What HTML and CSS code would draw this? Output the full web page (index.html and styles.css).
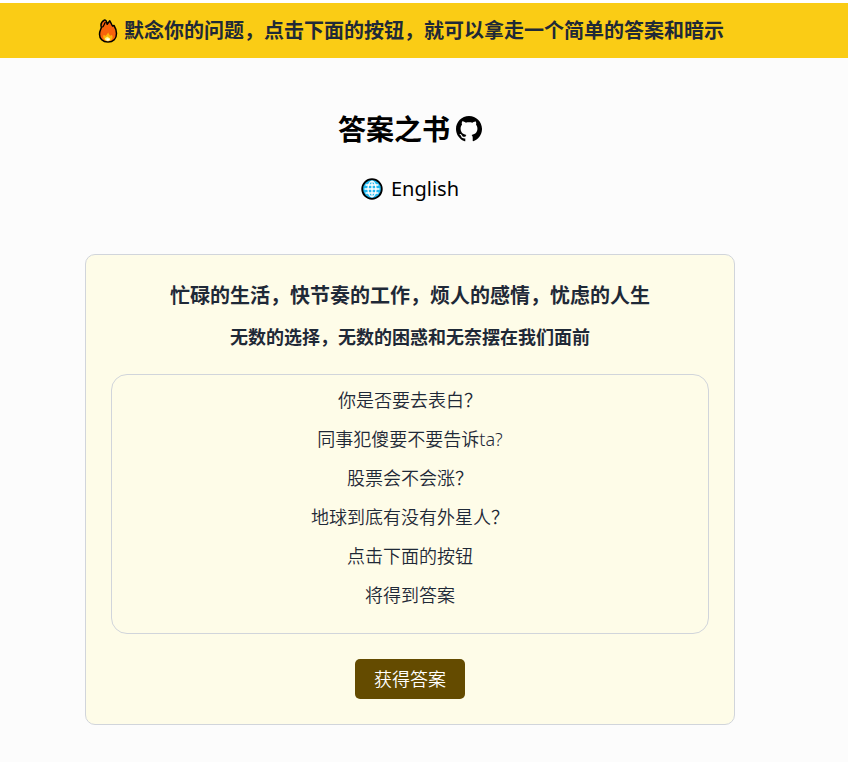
FILE: index.html
```html
<!DOCTYPE html>
<html lang="zh-CN">
<head>
<meta charset="utf-8">
<meta name="viewport" content="width=device-width, initial-scale=1">
<title>答案之书</title>
<link rel="stylesheet" href="styles.css">
</head>
<body>
<header class="banner">
  <svg class="flame" viewBox="0 0 20 24" aria-hidden="true">
    <path d="M10 23C4.500 23 1.500 19.500 1.500 15.200C1.500 12 3 10.200 3.400 8.500C2.600 6.200 3.200 3 6 1.300C7.500.600 8.500 1.800 8.600 3.200L9.200 5.200L11.800 1.800C13.200 4 13.400 5.600 14.600 7L16 6.500C17.600 9 18.500 11.500 18.500 14.500C18.500 19.500 15.300 23 10 23Z" fill="#f7630c" stroke="#000" stroke-width="1.500" stroke-linejoin="round"/>
    <path d="M4.200 8.200C5.800 7.600 6 5 7.500 3.200" fill="none" stroke="#000" stroke-width="1.200"/>
    <path d="M10 22.200C7.200 22.200 5.200 20.500 5.200 18L5.500 16L7.800 16.800L10.300 13.500C10.600 15 11.600 15.400 12 16.800L14 16C15.600 19 13.800 22.200 10 22.200Z" fill="#fcb50a"/>
    <path d="M7 20.500C6.500 18.500 8 18.700 9.500 17.500C10 18.700 12.700 19 12.200 20.500C11 22 8.200 22 7 20.500Z" fill="#fff478"/>
    <path d="M8.500 19.500H11.500V21.500H8.500Z" fill="#fff"/>
  </svg>
  <p>默念你的问题，点击下面的按钮，就可以拿走一个简单的答案和暗示</p>
</header>
<main class="page">
  <div class="title">
    <h1>答案之书</h1>
    <a href="#" aria-label="GitHub">
      <svg class="github" viewBox="64 76 895 895" aria-hidden="true"><path d="M511.600 76.300C264.300 76.200 64 276.400 64 523.500 64 718.900 189.300 885 363.800 946c23.500 5.900 19.900-10.800 19.900-22.200v-77.500c-135.700 15.900-141.200-73.900-150.300-88.900C215 726 171.500 718 184.500 703c30.900-15.900 62.400 4 98.900 57.900 26.400 39.100 77.900 32.500 104 26 5.700-23.500 17.900-44.500 34.700-60.800-140.600-25.200-199.200-111-199.200-213 0-49.500 16.300-95 48.300-131.700-20.400-60.500 1.900-112.300 4.900-120 58.100-5.200 118.500 41.600 123.200 45.300 33-8.900 70.700-13.600 112.900-13.600 42.400 0 80.200 4.900 113.500 13.900 11.300-8.600 67.300-48.800 121.300-43.900 2.900 7.700 24.700 58.300 5.500 118 32.400 36.800 48.900 82.700 48.900 132.300 0 102.200-59 188.100-200 212.900a127.500 127.500 0 0 1 38.100 91v112.500c.800 9 0 17.900 15 17.900 177.100-59.700 304.600-227 304.600-424.100 0-247.200-200.400-447.300-447.500-447.300z"/></svg>
    </a>
  </div>
  <a class="language" href="#">
    <svg class="globe" viewBox="0 0 22 22" aria-hidden="true">
      <circle cx="11" cy="11" r="9.800" fill="#20b8f0" stroke="#000" stroke-width="1.800"/>
      <g fill="none" stroke="#fff" stroke-width="1.300">
        <ellipse cx="11" cy="11" rx="4" ry="7.800"/>
        <path d="M11 3V19M3.500 11H18.500M4.500 7H17.500M4.500 15H17.500"/>
      </g>
    </svg>
    <span>English</span>
  </a>
  <section class="card">
    <h2>忙碌的生活，快节奏的工作，烦人的感情，忧虑的人生</h2>
    <h3>无数的选择，无数的困惑和无奈摆在我们面前</h3>
    <ul class="questions">
      <li>你是否要去表白？</li>
      <li>同事犯傻要不要告诉ta?</li>
      <li>股票会不会涨？</li>
      <li>地球到底有没有外星人？</li>
      <li>点击下面的按钮</li>
      <li>将得到答案</li>
    </ul>
    <button class="answer" type="button">获得答案</button>
  </section>
</main>
</body>
</html>
```
FILE: styles.css
```css
* {
  box-sizing: border-box;
  margin: 0;
  padding: 0;
}

body {
  background: #fcfcfc;
  border-top: 3px solid #fff;
  color: #1f2937;
  font-family: "Noto Sans", "Noto Sans CJK SC", sans-serif;
}

a {
  color: #000;
  text-decoration: none;
}

svg {
  display: block;
}

.banner {
  display: flex;
  align-items: center;
  justify-content: center;
  gap: 6px;
  padding: 13px 26px 12px 0;
  background: #facc15;
  font-size: 20px;
  font-weight: 700;
  line-height: 30px;
}

.flame {
  width: 20px;
  height: 24px;
}

.page {
  display: flex;
  flex-direction: column;
  align-items: center;
  padding: 50px 28px 36px 0;
}

.title {
  display: flex;
  align-items: center;
  gap: 6px;
  color: #000;
}

.title h1 {
  font-size: 28px;
  line-height: 42px;
}

.github {
  width: 26px;
  height: 26px;
}

.language {
  display: flex;
  align-items: center;
  gap: 8px;
  margin-top: 24px;
  font-size: 20px;
  line-height: 30px;
}

.globe {
  width: 22px;
  height: 22px;
}

.card {
  display: flex;
  flex-direction: column;
  align-items: center;
  width: 100%;
  max-width: 650px;
  margin-top: 50px;
  padding: 26px 25px 25px;
  border: 1px solid #d1d5db;
  border-radius: 10px;
  background: #fefce8;
  text-align: center;
}

.card h2 {
  font-size: 20px;
  line-height: 30px;
}

.card h3 {
  margin: 12px 0 23px;
  font-size: 18px;
  line-height: 28px;
}

.questions {
  display: grid;
  gap: 11px;
  width: 100%;
  padding: 11px 24px 24px;
  border: 1px solid #d1d5db;
  border-radius: 16px;
  font-size: 18px;
  font-weight: 350;
  line-height: 28px;
  list-style: none;
}

.answer {
  margin-top: 25px;
  padding: 6px 19px;
  border: 0;
  border-radius: 5px;
  background: #644b00;
  color: #fff;
  font-family: inherit;
  font-size: 18px;
  font-weight: 350;
  line-height: 28px;
}
```
